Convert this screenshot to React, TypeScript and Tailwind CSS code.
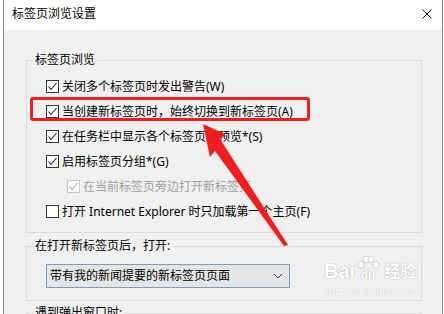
import React from "react";

function Box({ checked = true, disabled = false }: { checked?: boolean; disabled?: boolean }) {
  return (
    <span
      className={
        disabled
          ? "w-[13px] h-[13px] border border-[#c4c4c4] bg-white flex items-center justify-center shrink-0"
          : "w-[13px] h-[13px] border border-[#333333] bg-white flex items-center justify-center shrink-0"
      }
    >
      {checked && (
        <svg width="11" height="11" viewBox="0 0 11 11">
          <path
            d="M1.5 5.5 L4 8.5 L9.5 2"
            fill="none"
            stroke={disabled ? "#a8a8a8" : "#222222"}
            strokeWidth="1.1"
          />
        </svg>
      )}
    </span>
  );
}

function Row({
  label,
  checked = true,
  disabled = false,
  indent = false,
}: {
  label: string;
  checked?: boolean;
  disabled?: boolean;
  indent?: boolean;
}) {
  return (
    <div className={indent ? "h-[25px] flex items-center gap-[3px] pl-[21px]" : "h-[25px] flex items-center gap-[3px]"}>
      <Box checked={checked} disabled={disabled} />
      <span className={disabled ? "text-[#a0a0a0] whitespace-nowrap" : "text-black whitespace-nowrap"}>{label}</span>
    </div>
  );
}

export default function App() {
  return (
    <div
      className="relative w-[444px] h-[314px] overflow-hidden bg-white text-[12px] leading-[16px]"
      style={{ fontFamily: '"Noto Sans", "Noto Sans CJK SC", sans-serif' }}
    >
      <div className="ml-[3px] w-[440px] h-[314px] border-x border-[#8a8a8a] flex flex-col">
        {/* title bar */}
        <div className="h-[30px] bg-white flex items-center justify-between pl-[8px] pr-[10px] shrink-0">
          <span className="text-black text-[12px] -mt-[2px]">标签页浏览设置</span>
          <svg width="10" height="10" viewBox="0 0 10 10" className="-mt-[2px]">
            <path d="M0.5 0.5 L9.5 9.5 M9.5 0.5 L0.5 9.5" stroke="#111" strokeWidth="1" />
          </svg>
        </div>
        {/* content */}
        <div className="flex-1 bg-[#f0f0f0] pl-[22px] pr-[20px] pt-[30px]">
          {/* group 1 */}
          <div className="relative border border-[#dcdcdc] pt-[13px] pb-[8px] pl-[19px]">
            <span className="absolute -top-[9px] left-[6px] px-[2px] bg-[#f0f0f0] text-black">标签页浏览</span>
            <Row label="关闭多个标签页时发出警告(W)" />
            <Row label="当创建新标签页时，始终切换到新标签页(A)" />
            <Row label="在任务栏中显示各个标签页的预览*(S)" />
            <Row label="启用标签页分组*(G)" />
            <Row label="在当前标签页旁边打开新标签页" disabled indent />
            <Row label="打开 Internet Explorer 时只加载第一个主页(F)" checked={false} />
          </div>
          {/* group 2 */}
          <div className="relative mt-[13px] border border-[#dcdcdc] pt-[17px] pb-[12px] pl-[19px]">
            <span className="absolute -top-[9px] left-[6px] px-[2px] bg-[#f0f0f0] text-black">在打开新标签页后，打开:</span>
            <div className="w-[244px] h-[24px] border border-[#7a9cbd] bg-[#e5e5e5] flex items-center justify-between pl-[3px] pr-[6px]">
              <span className="text-black whitespace-nowrap">带有我的新闻提要的新标签页页面</span>
              <svg width="10" height="6" viewBox="0 0 10 6">
                <path d="M1 1 L5 5 L9 1" fill="none" stroke="#333" strokeWidth="1" />
              </svg>
            </div>
          </div>
          {/* group 3 */}
          <div className="relative mt-[12px] border border-[#dcdcdc] h-[40px]">
            <span className="absolute -top-[9px] left-[6px] px-[2px] bg-[#f0f0f0] text-black">遇到弹出窗口时:</span>
          </div>
        </div>
      </div>

      {/* watermark */}
      <div className="absolute left-[324px] top-[255px] flex flex-col items-center pointer-events-none">
        <div className="flex items-end gap-[1px] text-white [text-shadow:0_0_1px_#b0b0b0,0_0_1px_#b0b0b0]">
          <span className="text-[20px] leading-[20px] font-bold" style={{ fontFamily: '"Liberation Sans", sans-serif' }}>Bai</span>
          <span className="relative w-[24px] h-[26px] flex items-end justify-center">
            <svg width="24" height="16" viewBox="0 0 24 16" className="absolute top-0 left-0">
              <ellipse cx="5" cy="10" rx="3" ry="3.5" fill="#fff" stroke="#c4c4c4" strokeWidth="0.8" />
              <ellipse cx="10" cy="4.5" rx="3" ry="3.5" fill="#fff" stroke="#c4c4c4" strokeWidth="0.8" />
              <ellipse cx="15" cy="4.5" rx="3" ry="3.5" fill="#fff" stroke="#c4c4c4" strokeWidth="0.8" />
              <ellipse cx="20" cy="10" rx="3" ry="3.5" fill="#fff" stroke="#c4c4c4" strokeWidth="0.8" />
            </svg>
            <span className="text-[12px] leading-[12px] font-bold" style={{ fontFamily: '"Liberation Sans", sans-serif' }}>du</span>
          </span>
          <span className="text-[16px] leading-[20px] font-bold ml-[3px]">经验</span>
        </div>
        <span className="text-[12px] leading-[12px] mt-[4px] text-white [text-shadow:0_0_1px_#b0b0b0]" style={{ fontFamily: '"Liberation Serif", serif' }}>
          jingyan.baidu.com
        </span>
      </div>

      {/* red highlight */}
      <div className="absolute left-[30px] top-[97px] w-[280px] h-[24px] border-[3px] border-[#f41d1d] rounded-[3px] pointer-events-none" />

      {/* red arrow */}
      <svg className="absolute left-0 top-0 pointer-events-none" width="444" height="314" viewBox="0 0 444 314">
        <polygon
          points="203,124 225,134 220,139 288,245 284,246 215,151 210,157"
          fill="#f41d1d"
        />
      </svg>
    </div>
  );
}
